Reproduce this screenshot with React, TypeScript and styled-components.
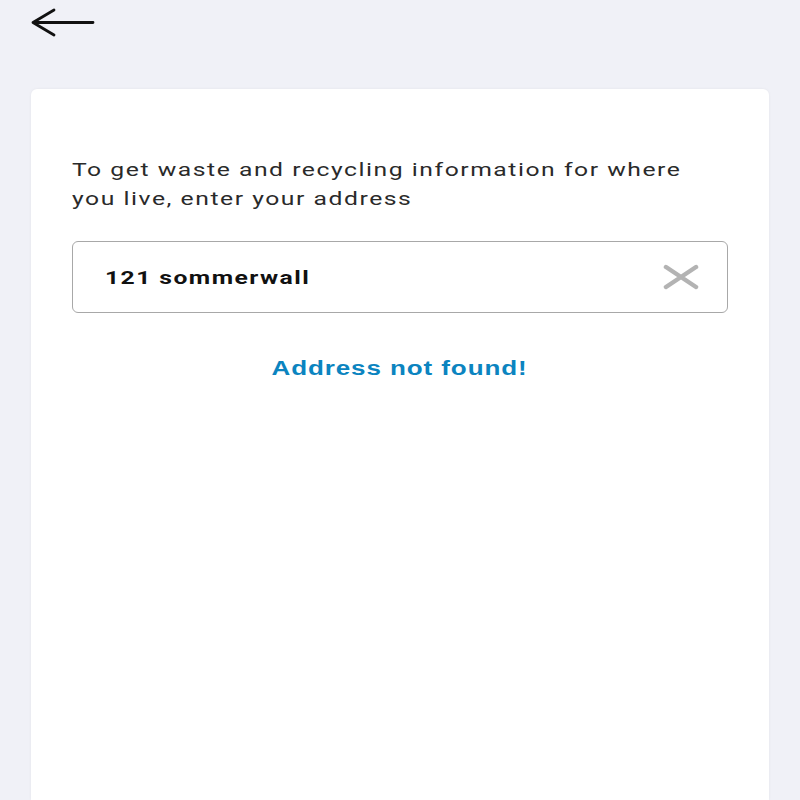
import styled, { createGlobalStyle } from 'styled-components'

const GlobalStyle = createGlobalStyle`
  html, body {
    margin: 0;
    padding: 0;
    background: #f0f1f7;
  }
  body {
    font-family: Roboto, "Liberation Sans", sans-serif;
  }
`

const Page = styled.div`
  width: 800px;
  height: 800px;
  overflow: hidden;
  display: flex;
  flex-direction: column;
  padding: 0 31px;
  box-sizing: border-box;
`

const TopBar = styled.div`
  height: 89px;
  display: flex;
  align-items: flex-start;
  padding-top: 8px;
  box-sizing: border-box;
`

const BackButton = styled.button`
  border: none;
  background: none;
  padding: 0;
  cursor: pointer;
  width: 64px;
  height: 30px;
  display: flex;
  align-items: center;
`

const Card = styled.div`
  flex: 1;
  background: #ffffff;
  border-radius: 6px 6px 0 0;
  box-shadow: 0 0 3px rgba(0, 0, 0, 0.06);
  padding: 66px 41px 0;
  display: flex;
  flex-direction: column;
`

// the app renders its type slightly wide, so the text blocks are stretched
const Intro = styled.p`
  margin: 0;
  width: 490px;
  font-size: 19px;
  line-height: 29px;
  letter-spacing: 1.18px;
  color: #2a2a2a;
  transform: scaleX(1.3);
  transform-origin: left center;
`

const SearchBox = styled.div`
  margin-top: 28px;
  height: 72px;
  border: 1.5px solid #a8a8a8;
  border-radius: 6px;
  display: flex;
  align-items: center;
  padding: 0 28px 0 32px;
  box-sizing: border-box;
`

const SearchValue = styled.div`
  flex: 1;
  display: flex;
`

const SearchText = styled.span`
  display: inline-block;
  font-weight: 700;
  font-size: 19px;
  letter-spacing: 1.1px;
  color: #111;
  transform: scaleX(1.3);
  transform-origin: left center;
`

const ClearButton = styled.button`
  border: none;
  background: none;
  padding: 0;
  width: 36px;
  height: 26px;
  display: flex;
  align-items: center;
  justify-content: center;
`

const NotFound = styled.div`
  margin-top: 44px;
  text-align: center;
`

const NotFoundText = styled.span`
  display: inline-block;
  font-family: "Liberation Sans", Arial, sans-serif;
  font-weight: 700;
  font-size: 20px;
  letter-spacing: 0.7px;
  color: #0b84c0;
  transform: scaleX(1.3);
`

export default function App() {
  return (
    <>
      <GlobalStyle />
      <Page>
        <TopBar>
          <BackButton aria-label="Back">
            <svg width="64" height="30" viewBox="0 0 64 30" fill="none">
              <path
                d="M62 14.5H3M23 2L2 14.5L23 27"
                stroke="#111"
                strokeWidth="2.8"
                strokeLinecap="round"
                strokeLinejoin="round"
              />
            </svg>
          </BackButton>
        </TopBar>
        <Card>
          <Intro>
            To get waste and recycling information for where you live, enter
            your address
          </Intro>
          <SearchBox>
            <SearchValue>
              <SearchText>121 sommerwall</SearchText>
            </SearchValue>
            <ClearButton aria-label="Clear">
              <svg width="36" height="26" viewBox="0 0 36 26" fill="none">
                <path
                  d="M3 3L33 23M33 3L3 23"
                  stroke="#b3b3b3"
                  strokeWidth="4.5"
                  strokeLinecap="round"
                />
              </svg>
            </ClearButton>
          </SearchBox>
          <NotFound>
            <NotFoundText>Address not found!</NotFoundText>
          </NotFound>
        </Card>
      </Page>
    </>
  )
}
